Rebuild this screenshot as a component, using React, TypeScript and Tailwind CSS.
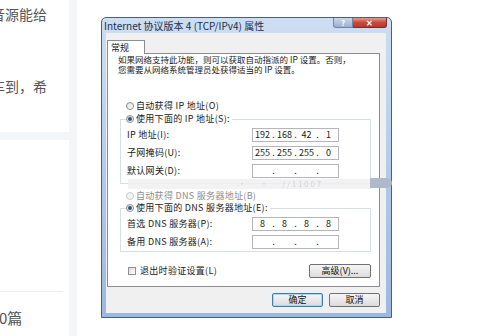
import { Fragment } from "react";

const font = '"Noto Sans CJK SC", "Noto Sans", sans-serif';

function Radio({ checked, disabled }: { checked?: boolean; disabled?: boolean }) {
  return (
    <span
      className={`flex h-[8px] w-[8px] shrink-0 items-center justify-center rounded-full border ${
        disabled
          ? "border-[#c9c9c9] bg-[#f4f4f4]"
          : "border-[#8c8e90] bg-gradient-to-br from-[#dcdcdc] to-white"
      }`}
    >
      {checked && <span className="h-[4px] w-[4px] rounded-full bg-[#2b557c]" />}
    </span>
  );
}

function IpField({ parts }: { parts?: string[] }) {
  const segs = parts ?? ["", "", "", ""];
  return (
    <div className="flex h-[14px] w-[87px] shrink-0 items-center border border-[#b4b6bb] bg-white text-[9px] leading-[12px] text-[#222]">
      {segs.map((s, i) => (
        <Fragment key={i}>
          {i > 0 && <span className="w-[3px] text-center">.</span>}
          <span className="w-[19px] text-center">{s}</span>
        </Fragment>
      ))}
    </div>
  );
}

function Row({ label, parts }: { label: string; parts?: string[] }) {
  return (
    <div className="flex h-[14px] items-center">
      <span className="w-[131px] pl-[6px] tracking-[0.3px]">{label}</span>
      <IpField parts={parts} />
    </div>
  );
}

function WinButton({ children, primary, w }: { children: string; primary?: boolean; w: string }) {
  return (
    <div
      className={`flex h-[14px] items-center justify-center rounded-[2px] border bg-gradient-to-b from-[#f6f6f6] to-[#dcdcdc] text-[9px] leading-[12px] text-[#111] ${w} ${
        primary ? "border-[#3c7fb1] shadow-[inset_0_0_0_1px_#a9d7f2]" : "border-[#707070]"
      }`}
    >
      {children}
    </div>
  );
}

export default function App() {
  return (
    <div
      className="relative flex h-[336px] w-[501px] overflow-hidden bg-white"
      style={{ fontFamily: font }}
    >
      {/* left column, clipped page text */}
      <div className="flex w-[69px] shrink-0 flex-col overflow-hidden text-[#555]">
        <div className="h-[132px] bg-white pt-[3px] text-[14px] leading-[22px] whitespace-nowrap">
          <div className="ml-[-9px]">音源能给</div>
          <div className="ml-[-9px] mt-[50px]">车到，希</div>
        </div>
        <div className="h-[8px] bg-[#f4f5f7]" />
        <div className="flex-1 bg-white">
          <div className="mt-[151px] mr-[6px] h-px bg-[#eeeeee]" />
          <div className="ml-[-1px] mt-[16px] text-[15px] leading-[20px] whitespace-nowrap">0篇</div>
        </div>
      </div>
      <div className="w-[8px] shrink-0 bg-[#f4f5f7]" />

      {/* screenshot of the dialog */}
      <div className="flex-1 pl-[24px] pt-[17px]">
        <div className="flex h-[301px] w-[291px] flex-col rounded-t-[5px] border border-[#4a5f80] bg-gradient-to-b from-[#cddef2] via-[#b3cbea] to-[#9cb8de]">
          {/* title bar */}
          <div className="flex h-[15px] shrink-0 items-start">
            <span className="pl-[2px] pt-[2px] text-[10px] leading-[12px] text-[#1b2f4b] whitespace-nowrap">
              Internet 协议版本 4 (TCP/IPv4) 属性
            </span>
            <div className="ml-auto mr-[4px] flex">
              <div className="flex h-[10px] w-[20px] items-center justify-center rounded-bl-[3px] border border-t-0 border-[#6f84a5] bg-gradient-to-b from-[#c9d6e8] to-[#9cb1cf] text-[8px] leading-none font-bold text-white">
                ?
              </div>
              <div className="flex h-[10px] w-[34px] items-center justify-center rounded-br-[3px] border border-t-0 border-l-0 border-[#7a2f2a] bg-gradient-to-b from-[#e39a8c] via-[#c9493a] to-[#b8382a] text-[8px] leading-none font-bold text-white">
                ✕
              </div>
            </div>
          </div>

          {/* client area */}
          <div className="ml-[4px] mr-[5px] h-[280px] shrink-0 bg-[#f0f0f0] pl-[1px] pt-[7px] text-[9px] leading-[10px] text-[#1a1a1a]">
            <div className="relative z-10 mb-[-1px] flex h-[14px] w-[38px] items-center border border-b-0 border-[#898c95] bg-white pl-[3px]">
              常规
            </div>
            <div className="h-[234px] w-[273px] border border-[#898c95] bg-white pl-[10px] pr-[8px]">
              <p className="text-[8.5px] leading-[10px] whitespace-nowrap">
                如果网络支持此功能，则可以获取自动指派的 IP 设置。否则，
                <br />
                您需要从网络系统管理员处获得适当的 IP 设置。
              </p>

              <div className="ml-[8px] mt-[27px] flex h-[10px] items-center gap-[2px] tracking-[0.3px]">
                <Radio />
                <span>自动获得 IP 地址(O)</span>
              </div>

              <fieldset className="ml-[2px] mt-[3px] border border-[#d5dfe5] pb-[5px]">
                <legend className="ml-[5px] flex h-[10px] items-center gap-[2px] pr-[2px] tracking-[0.3px]">
                  <Radio checked />
                  <span>使用下面的 IP 地址(S):</span>
                </legend>
                <div className="mt-[4px] flex flex-col gap-[4px]">
                  <Row label="IP 地址(I):" parts={["192", "168", "42", "1"]} />
                  <Row label="子网掩码(U):" parts={["255", "255", "255", "0"]} />
                  <Row label="默认网关(D):" />
                </div>
              </fieldset>

              <div className="ml-[8px] mt-[7px] flex h-[10px] items-center gap-[2px] tracking-[0.3px] text-[#8d8d8d]">
                <Radio disabled />
                <span>自动获得 DNS 服务器地址(B)</span>
              </div>

              <fieldset className="ml-[2px] mt-[2px] border border-[#d5dfe5] pb-[2px]">
                <legend className="ml-[5px] flex h-[10px] items-center gap-[2px] pr-[2px] tracking-[0.3px]">
                  <Radio checked />
                  <span>使用下面的 DNS 服务器地址(E):</span>
                </legend>
                <div className="mt-[4px] flex flex-col gap-[4px]">
                  <Row label="首选 DNS 服务器(P):" parts={["8", "8", "8", "8"]} />
                  <Row label="备用 DNS 服务器(A):" />
                </div>
              </fieldset>

              <div className="mt-[12px] flex h-[13px] items-center">
                <span className="ml-[10px] h-[8px] w-[8px] border border-[#8e8f8f] bg-gradient-to-br from-[#dcdcdc] to-white" />
                <span className="ml-[4px] tracking-[0.3px]">退出时验证设置(L)</span>
                <div className="ml-auto">
                  <WinButton w="w-[62px]">高级(V)...</WinButton>
                </div>
              </div>
            </div>

            <div className="mt-[6px] flex w-[273px] justify-end gap-[6px]">
              <WinButton primary w="w-[51px]">确定</WinButton>
              <WinButton w="w-[51px]">取消</WinButton>
            </div>
          </div>
        </div>
      </div>

      {/* blurred watermark strip over the picture */}
      <div className="absolute left-[128px] top-[179px] flex h-[10px] w-[244px] items-center gap-[14px] bg-[#efefef]/80 pl-[110px] text-[8px] leading-[10px] text-[#d2d2d2] blur-[0.6px]">
        <span>·</span>
        <span>·</span>
        <span>/ / 1 1 0 0 7</span>
      </div>
      <div className="absolute left-[370px] top-[178px] h-[10px] w-[22px] rounded-r-full bg-[#aeb9c9]" />
    </div>
  );
}
